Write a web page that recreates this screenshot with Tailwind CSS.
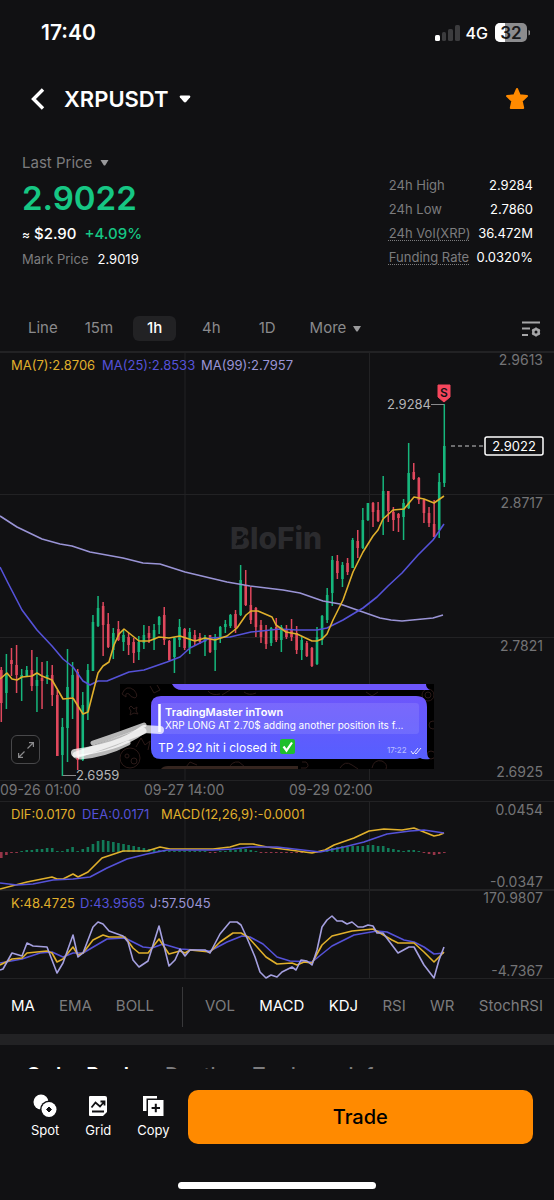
<!DOCTYPE html>
<html lang="en">

<head>
<meta charset="UTF-8">
<meta name="viewport" content="width=device-width, initial-scale=1.0">
<title>XRPUSDT</title>
<script src="https://cdn.jsdelivr.net/npm/@tailwindcss/browser@4"></script>
</head>

<body class="bg-[#111113] text-white font-['Inter',sans-serif] min-h-screen overflow-x-hidden">

	<!-- Status bar -->
	<div class="flex items-center justify-between h-[66px] pl-[41px] pr-6">
		<span class="text-[21px] font-semibold">17:40</span>
		<div class="flex items-center gap-[6px]">
			<svg class="w-[25px] h-4" viewBox="0 0 25 16">
				<rect x="0" y="10" width="5" height="6" rx="1.5" fill="#fff" />
				<rect x="7" y="7" width="4" height="9" rx="1.5" fill="#3c3c3e" />
				<rect x="13" y="4" width="5" height="12" rx="1.5" fill="#3c3c3e" />
				<rect x="20" y="0" width="5" height="16" rx="1.5" fill="#3c3c3e" />
			</svg>
			<span class="text-base font-medium">4G</span>
			<svg class="w-9 h-5" viewBox="0 0 36 20">
				<rect x="1" y="0" width="32" height="19" rx="5" fill="#8c8c8e" />
				<path d="M6 0h5v19H6a5 5 0 0 1-5-5V5a5 5 0 0 1 5-5z" fill="#fff" />
				<path d="M34.500 7q2 .8 2 2.800t-2 2.800z" fill="#8c8c8e" />
				<text x="17" y="16" text-anchor="middle" font-size="17" font-weight="600" fill="#19191b">32</text>
			</svg>
		</div>
	</div>

	<!-- Title -->
	<header class="flex items-center h-[66px] pl-[30px] pr-[25px]">
		<button type="button" aria-label="Back">
			<svg class="w-4 h-6" viewBox="0 0 16 24" fill="none" stroke="#fff" stroke-width="3.400">
				<path d="M13 2.500 3.500 12l9.500 9.500" />
			</svg>
		</button>
		<button type="button" class="flex items-center gap-[10px] ml-[18px]">
			<h1 class="text-[22px] font-semibold">XRPUSDT</h1>
			<svg class="w-3 h-2" viewBox="0 0 12 8" fill="#fff"><path d="M1.500.5h9q1.500.5.6 1.700L7.300 6.800Q6 8 4.700 6.800L.9 2.200Q0 1 1.500.5z" /></svg>
		</button>
		<button type="button" class="ml-auto" aria-label="Favourite">
			<svg class="w-6 h-6" viewBox="0 0 24 24" fill="#ff8a00" stroke="#ff8a00" stroke-width="2" stroke-linejoin="round"><path d="M12 2l2.800 6.300 7.200.8-5.300 4.900 1.500 7H5.800l1.500-7L2 9.100l7.200-.8z" /></svg>
		</button>
	</header>

	<!-- Price -->
	<section class="flex justify-between pl-[22px] pr-[21px] pt-[19px] h-[172px]">
		<div>
			<button type="button" class="flex items-center gap-2 text-[15px] leading-6 text-[#7c7c7e]">Last Price
				<svg class="w-[9px] h-[6px]" viewBox="0 0 8 6" fill="#9a9a9c"><path d="M0 0h8L4.800 5.200q-.8.8-1.600 0z" /></svg>
			</button>
			<div class="text-[33px] leading-[46px] font-semibold text-[#16c784]">2.9022</div>
			<div class="text-[15px] leading-[26px] font-medium"><span class="text-xs">≈</span> $2.90 <span class="text-[#16c784] ml-1">+4.09%</span></div>
			<div class="text-[13px] leading-6"><span class="text-[#7c7c7e] mr-[9px]">Mark Price</span>2.9019</div>
		</div>
		<dl class="grid grid-cols-[auto_auto] content-start gap-x-[6px] pt-[22px] text-[13px] leading-6">
			<dt class="text-[#7c7c7e]">24h High</dt><dd class="text-right">2.9284</dd>
			<dt class="text-[#7c7c7e]">24h Low</dt><dd class="text-right">2.7860</dd>
			<dt class="text-[#7c7c7e] underline decoration-dotted decoration-1 underline-offset-2">24h Vol(XRP)</dt><dd class="text-right">36.472M</dd>
			<dt class="text-[#7c7c7e] underline decoration-dotted decoration-1 underline-offset-2">Funding Rate</dt><dd class="text-right">0.0320%</dd>
		</dl>
	</section>

	<!-- Intervals -->
	<nav class="flex items-center h-[47px] pt-[2px] pl-7 pr-[13px] text-[15px] text-[#8a8a8c]">
		<button type="button" class="mr-[27px]">Line</button>
		<button type="button" class="mr-5">15m</button>
		<button type="button" class="w-[43px] h-[25px] mr-[26px] rounded-md bg-[#222224] text-white font-medium">1h</button>
		<button type="button" class="mr-[38px]">4h</button>
		<button type="button" class="mr-[34px]">1D</button>
		<button type="button" class="flex items-center gap-[7px]">More
			<svg class="w-2 h-[6px]" viewBox="0 0 8 6" fill="#9a9a9c"><path d="M0 0h8L4.800 5.200q-.8.8-1.600 0z" /></svg>
		</button>
		<button type="button" class="ml-auto" aria-label="Chart settings">
			<svg class="w-5 h-4" viewBox="0 0 20 16" fill="none" stroke="#a6a6a8" stroke-width="1.800">
				<path d="M1 1.500h18M1 7.500h8M1 14h6" />
				<circle cx="15" cy="11" r="2.700" stroke-width="2.600" />
				<path d="M15 6.500v9M11.100 8.800l7.800 4.500M11.100 13.300l7.800-4.500" stroke-width="1.800" />
				<circle cx="15" cy="11" r="1.500" fill="#111113" stroke="none" />
			</svg>
		</button>
	</nav>

	<!-- Chart -->
	<main class="relative">
		<svg class="block w-full" viewBox="0 351 554 628" font-size="14" fill="none">
			<defs>
				<linearGradient id="bubble" x1="0" y1="0" x2="0" y2="1">
					<stop offset="0" stop-color="#6d56fb" />
					<stop offset="1" stop-color="#565fff" />
				</linearGradient>
			</defs>

			<!-- grid -->
			<g stroke="#222224">
				<path d="M0 352h554" stroke-width="2" />
				<path d="M0 494.500h554M0 637.500h554M0 780.500h554M0 801.500h554M0 978.500h554" />
				<path d="M0 890h554" stroke-width="2" />
				<path d="M185 353v427M369.500 353v427M185 801v177M369.500 801v177" />
			</g>
			<text x="230" y="549" font-size="30" font-weight="800" fill="#2b2b2e">BloFin</text>
			<path d="M236 545l10-10" stroke="#111113" stroke-width="2" />

			<g id="candles"></g>
			<g id="hist"></g>

			<g stroke-width="1.600" stroke-linejoin="round">
				<path stroke="#9a94d6" d="M0 516 17 527 42 539 60 544 72 546 90 552 123 558 143 563 160 564 185 572 227 582 250 586 283 590 300 593 323 601 340 604 360 611 380 618 391 620 402 621 433 618 443 615" />
				<path stroke="#5552d8" d="M0 567 8 583 22 610 37 630 52 646 63 659 73 667 83 681 90 685 98 681 107 681 129 672 144 670 167 662 180 657 190 648 200 643 210 638 230 637 251 632 280 629 297 630 317 630 327 628 343 620 363 608 377 597 388 586 402 573 418 555 433 540 444 524" />
				<path stroke="#e0b02c" d="M0 679 7 673 12 679 17 680 22 677 32 676 37 673 42 676 52 680 63 699 73 698 83 714 88 712 98 673 103 666 109 662 114 645 119 634 124 629 129 633 139 641 149 641 159 637 169 638 180 636 195 641 205 638 215 640 227 636 237 628 246 615 251 611 258 611 272 617 276 625 286 632 297 634 312 641 317 641 322 639 327 634 333 620 343 600 353 572 363 552 373 536 378 530 383 519 393 510 404 509 414 497 424 499 434 503 444 496" />

				<path stroke="#e0b02c" d="M0 889 27 882 52 877 57 879 63 879 73 874 78 877 88 872 102 858 123 851 147 851 160 847 170 849 213 849 230 847 240 844 253 844 267 847 290 850 312 853 325 850 334 845 354 838 369 831 384 829 402 830 414 828 424 832 434 836 439 835 444 833" />
				<path stroke="#5552d8" d="M0 883 17 885 33 884 53 880 73 879 90 877 107 868 127 859 147 854 167 850 213 850 233 849 250 847 277 847 320 852 344 847 364 842 387 834 410 831 424 830 444 833" />

				<path stroke="#5552d8" d="M0 963 22 959 40 953 52 952 63 957 73 953 83 953 107 939 125 938 143 947 152 948 163 944 180 949 210 951 227 942 242 936 250 937 263 944 277 957 290 961 312 962 332 946 354 935 377 931 387 932 404 940 414 942 424 947 434 954 444 953" />
				<path stroke="#e0b02c" d="M0 965 12 959 22 958 27 953 47 951 52 953 57 962 63 959 73 947 78 955 83 953 93 940 103 935 109 937 125 937 133 948 139 953 148 953 159 939 169 954 180 951 185 953 190 950 210 952 220 942 233 933 241 933 248 937 266 957 277 964 292 963 297 965 304 962 312 963 322 945 332 936 352 931 373 929 380 933 392 940 398 943 414 943 424 952 434 962 444 952" />
				<path stroke="#a5a0e0" d="M0 970 3 969 12 953 22 956 27 943 33 946 47 947 57 973 63 963 73 935 78 957 83 953 93 927 98 922 103 924 109 931 123 936 128 942 133 960 139 967 148 961 159 926 169 966 175 960 180 949 185 956 190 950 205 950 210 953 220 934 230 922 237 922 241 925 247 938 255 957 260 972 266 978 271 975 277 977 282 972 292 967 296 970 301 960 307 961 312 965 317 950 322 927 327 920 332 916 337 921 342 921 347 924 352 922 358 927 363 927 368 925 373 926 377 933 383 933 398 953 409 947 414 947 424 965 434 978 439 960 444 947" />
			</g>

			<!-- legends -->
			<g font-size="13">
				<g fill="#e0b02c">
					<text x="11" y="370">MA(7):2.8706</text>
					<text x="11" y="819">DIF:0.0170</text>
					<text x="161" y="819">MACD(12,26,9):-0.0001</text>
					<text x="11" y="908">K:48.4725</text>
				</g>
				<g fill="#5552d8">
					<text x="102" y="370">MA(25):2.8533</text>
					<text x="82" y="819">DEA:0.0171</text>
					<text x="80" y="908">D:43.9565</text>
				</g>
				<g fill="#9a94d6">
					<text x="201" y="370">MA(99):2.7957</text>
					<text x="150" y="908">J:57.5045</text>
				</g>
			</g>

			<!-- scales -->
			<g fill="#747476" text-anchor="end">
				<text x="543" y="365">2.9613</text>
				<text x="543" y="508">2.8717</text>
				<text x="543" y="651">2.7821</text>
				<text x="543" y="777">2.6925</text>
				<text x="543" y="815">0.0454</text>
				<text x="543" y="887">-0.0347</text>
				<text x="543" y="903">170.9807</text>
				<text x="543" y="976">-4.7367</text>
			</g>
			<g fill="#747476">
				<text x="0" y="795">09-26 01:00</text>
				<text x="144" y="795">09-27 14:00</text>
				<text x="289" y="795">09-29 02:00</text>
			</g>

			<!-- high, low and last price marks -->
			<g fill="#b4b4b6" font-size="13">
				<text x="387" y="409">2.9284</text>
				<text x="76" y="780">2.6959</text>
			</g>
			<path d="M431 404.500h13M63 775.500h13" stroke="#8a8a8c" />
			<path d="M451 446h34" stroke="#c8c8ca" stroke-dasharray="4 3" />
			<rect x="485" y="437" width="58" height="18" rx="2" fill="#111113" stroke="#fff" stroke-width="1.500" />
			<text x="514" y="451" text-anchor="middle" font-size="13" fill="#fff">2.9022</text>
			<path d="M438 385h12v12l-6 5-6-5z" fill="#f6465d" stroke="#f6465d" stroke-linejoin="round" />
			<text x="444" y="397" text-anchor="middle" font-size="12" font-weight="600" fill="#111113">S</text>

			<!-- pasted chat message -->
			<rect x="120" y="684" width="314" height="85" fill="#000" />
			<g stroke="#2b1a18">
				<path d="M122 694q4-10 12-4q5 6 1 8q-5-1-6-4q-4-2-3 3zM131 706l3 3 3-2-1 4 2 3-4-1-4 2 1-4-2-3zM136 747l5-9 4 7 5-4-2 9M150 686l4 7 6-3-3-5" />
				<circle cx="130" cy="758" r="10" /><circle cx="127" cy="756" r="2" /><circle cx="134" cy="761" r="3" />
				<path d="M208 691q4 5 12 3M222 695l8-5M244 692q5 4 12 1M366 692l6 4 6-4M229 769q2-8 10-7l6 5M340 768q5-8 12-3l6 4M372 768q2-9 10-7q6 3 4 8M302 762h4q4 4 0 6h-5M186 767l4-5 7 3" />
				<circle cx="428" cy="695" r="6" /><circle cx="428" cy="695" r="3" />
				<circle cx="433" cy="725" r="4" /><circle cx="431" cy="755" r="4" />
			</g>
			<rect x="434" y="684" width="6" height="85" fill="#111113" />
			<path d="M161 769q2-3 7-3h130v3z" fill="#35251f" />
			<path d="M172 684h254q0 4 4 6H182q-7 0-10-6z" fill="#6d56fb" />
			<path d="M161 696h255q11 0 11 11v45q0 5 3 7-7 1-10-1-2 1-6 1H161q-10 0-10-10v-43q0-10 10-10z" fill="url(#bubble)" />
			<rect x="158" y="703" width="261" height="31" rx="3" fill="#fff" fill-opacity=".1" />
			<path d="M159.500 704v28" stroke="#fff" stroke-width="2.500" />
			<g fill="#fff">
				<text x="165" y="716" font-size="11" font-weight="600">TradingMaster inTown</text>
				<text x="165" y="729" font-size="10">XRP LONG AT 2.70$ adding another position its f...</text>
				<text x="158" y="752" font-size="12">TP 2.92 hit i closed it</text>
				<text x="387" y="753" font-size="8" fill-opacity=".6">17:22</text>
			</g>
			<path d="M411 751l2 3 5-6M415 753l1 1 5-6" stroke="#fff" stroke-opacity=".85" />
			<rect x="280" y="739" width="15" height="15" rx="2" fill="#1fbf2c" />
			<path d="M283.500 746.500l3 4 5.500-8" stroke="#fff" stroke-width="2.200" />

			<!-- marker stroke -->
			<g stroke="#fff" stroke-linecap="round" stroke-linejoin="round">
				<path d="M75 753Q95 750 112 745T144 729L160 730" stroke-width="8" stroke-opacity=".75" />
				<path d="M93 743Q120 734 144 725M80 757Q105 755 128 743" stroke-width="5" stroke-opacity=".7" />
				<path d="M76 755Q100 747 143 731" stroke-width="7" stroke-opacity=".7" />
			</g>
		</svg>
		<button type="button" aria-label="Full screen"
			class="absolute left-[11px] top-[384px] size-[29px] flex items-center justify-center border border-[#48484a] rounded-md bg-[#111113]/70">
			<svg class="size-4" viewBox="0 0 16 16" fill="none" stroke="#8a8a8c" stroke-width="1.200">
				<path d="M9.500 6.500l6-6M11 .6h4.400V5M6.500 9.500l-6 6M.6 11v4.400H5" />
			</svg>
		</button>
	</main>

	<!-- Indicators -->
	<nav class="flex items-center h-[55px] px-[11px] text-[15px] text-[#7c7c7e]">
		<div class="flex gap-6 pr-7">
			<button type="button" class="text-white">MA</button>
			<button type="button">EMA</button>
			<button type="button">BOLL</button>
		</div>
		<div class="flex flex-1 items-center justify-between h-10 pl-[22px] border-l border-[#38383a]">
			<button type="button">VOL</button>
			<button type="button" class="text-white">MACD</button>
			<button type="button" class="text-white">KDJ</button>
			<button type="button">RSI</button>
			<button type="button">WR</button>
			<button type="button">StochRSI</button>
		</div>
	</nav>
	<div class="h-[11px] bg-[#222224]"></div>

	<!-- Tabs, mostly hidden behind the bottom bar -->
	<nav class="flex items-start gap-[30px] h-6 pl-[26px] pt-4 overflow-hidden text-xl font-medium text-[#7c7c7e]">
		<button type="button" class="text-white font-semibold">Order Book</button>
		<button type="button">Depth</button>
		<button type="button">Trades</button>
		<button type="button">Info</button>
	</nav>

	<!-- Bottom bar -->
	<footer class="bg-[#111113]">
		<div class="flex items-center pt-[21px] pl-[31px] pr-[21px]">
			<div class="flex gap-[26px] text-[13px] leading-5">
				<button type="button" class="flex flex-col items-center gap-[2px]">
					<svg class="size-6" viewBox="0 0 24 24">
						<circle cx="8" cy="8" r="7.500" fill="#fff" />
						<circle cx="16" cy="15.500" r="9" fill="#111113" />
						<circle cx="16" cy="15.500" r="7.500" fill="#fff" />
						<path d="M16 13l2.500 2.500L16 18l-2.500-2.500z" fill="#111113" stroke="#111113" stroke-linejoin="round" />
					</svg>
					Spot
				</button>
				<button type="button" class="flex flex-col items-center gap-[2px]">
					<svg class="size-6" viewBox="0 0 24 24">
						<path d="M4 2h15q2 0 2 2v14l-4 4H4q-1 0-1-1V3q0-1 1-1z" fill="#fff" />
						<path d="M5.500 13.500l4-5 4.500 4 4-4.500M14.500 7.500h4v4M6 17.500h12" fill="none" stroke="#111113" stroke-width="1.800" />
					</svg>
					Grid
				</button>
				<button type="button" class="flex flex-col items-center gap-[2px]">
					<svg class="size-6" viewBox="0 0 24 24">
						<path d="M2 2h14v2.500H5.500V17H2z" fill="#fff" />
						<path d="M7 6h15.500v16H7z" fill="#fff" />
						<path d="M14.800 9.800v8.400M10.600 14h8.400" stroke="#111113" stroke-width="2" />
					</svg>
					Copy
				</button>
			</div>
			<button type="button" class="flex-1 h-[54px] ml-[18px] rounded-[10px] bg-[#ff8a00] text-black text-xl font-medium">Trade</button>
		</div>
		<div class="pt-[38px] pb-[11px]">
			<div class="w-[198px] h-[7px] mx-auto rounded-full bg-white"></div>
		</div>
	</footer>

	<script>
		const UP = '#16b67c';
		const DOWN = '#e0485d';
		const STEP = 5.092;

		// direction, high, low, body top, body bottom
		const candles = [
			['d', 667, 722, 670, 703], ['u', 654, 709, 673, 693], ['d', 648, 676, 660, 664], ['d', 645, 693, 665, 675],
			['u', 669, 701, 675, 677], ['u', 666, 677, 670, 676], ['d', 650, 691, 670, 686], ['u', 657, 712, 680, 686],
			['d', 662, 709, 678, 681], ['u', 661, 684, 675, 678], ['d', 665, 706, 675, 695], ['d', 690, 756, 695, 756],
			['u', 718, 776, 727, 755], ['u', 649, 762, 687, 728], ['u', 662, 719, 675, 697], ['d', 669, 770, 672, 760],
			['u', 692, 761, 705, 760], ['u', 664, 720, 670, 712], ['u', 615, 671, 622, 671], ['u', 596, 627, 608, 626],
			['d', 602, 656, 606, 625], ['d', 613, 648, 624, 647], ['u', 628, 659, 633, 650], ['d', 621, 641, 629, 640],
			['u', 630, 651, 635, 642], ['d', 633, 655, 637, 645], ['d', 638, 663, 642, 653], ['u', 636, 660, 642, 652],
			['u', 625, 649, 635, 643], ['d', 626, 643, 633, 638], ['u', 624, 650, 630, 640], ['u', 616, 634, 617, 625],
			['d', 607, 645, 615, 640], ['d', 640, 661, 641, 660], ['u', 637, 673, 638, 657], ['u', 619, 647, 627, 640],
			['d', 628, 650, 629, 648], ['u', 628, 654, 632, 648], ['d', 630, 646, 635, 640], ['d', 633, 644, 637, 642],
			['u', 635, 656, 637, 642], ['d', 635, 653, 635, 652], ['u', 634, 671, 638, 650], ['u', 626, 643, 627, 637],
			['u', 620, 633, 624, 627], ['u', 614, 628, 615, 626], ['d', 610, 633, 614, 628], ['u', 565, 616, 580, 615],
			['d', 570, 606, 585, 605], ['d', 587, 624, 605, 620], ['d', 607, 637, 608, 627], ['d', 620, 643, 625, 637],
			['d', 625, 649, 630, 644], ['u', 627, 646, 628, 643], ['d', 618, 642, 627, 640], ['u', 625, 652, 627, 640],
			['d', 625, 639, 629, 637], ['d', 619, 641, 629, 637], ['d', 626, 654, 633, 650], ['u', 637, 660, 640, 650],
			['d', 641, 657, 643, 656], ['d', 647, 667, 648, 666], ['u', 627, 665, 637, 664], ['u', 615, 645, 616, 640],
			['u', 588, 623, 595, 620], ['u', 556, 606, 560, 593], ['d', 555, 579, 561, 573], ['u', 562, 587, 565, 579],
			['d', 558, 575, 563, 572], ['u', 538, 568, 540, 568], ['d', 530, 558, 541, 548], ['u', 508, 549, 520, 548],
			['u', 503, 521, 503, 520], ['d', 502, 527, 503, 512], ['d', 502, 522, 510, 521], ['u', 476, 535, 491, 518],
			['d', 491, 522, 491, 511], ['d', 507, 531, 512, 520], ['d', 513, 532, 514, 518], ['u', 499, 540, 503, 517],
			['u', 443, 509, 473, 508], ['d', 463, 480, 472, 479], ['d', 477, 504, 478, 500], ['d', 499, 523, 500, 513],
			['d', 507, 527, 513, 523], ['d', 500, 537, 524, 537], ['u', 473, 538, 482, 530], ['u', 404, 487, 446, 483],
		];

		// MACD bars, px above (+) or below (-) zero
		const hist = [
			-6, -3, -1, -1, 1, 2, 2, 3, 3, 4, 4, 1, 1, 3, 5, 1, 3, 5, 8, 11, 12, 11, 10, 9, 8, 7, 6, 5, 4, 3, 3, 2,
			2, 1, 1, 1, 1, 1, 1, 1, 1, -1, -1, 1, 1, 2, 2, 3, 3, 2, 1, -1, -1, -1, -1, -1, -1, -1, -1, -1, -1, -1, -1,
			1, 3, 4, 5, 6, 5, 6, 6, 6, 7, 7, 6, 6, 4, 3, 2, 1, 2, 2, 1, -1, -2, -3, -2, -1,
		];

		function bar(parent, x, top, bottom, width, fill) {
			const r = document.createElementNS('http://www.w3.org/2000/svg', 'rect');
			r.setAttribute('x', x - width / 2);
			r.setAttribute('y', top);
			r.setAttribute('width', width);
			r.setAttribute('height', bottom - top);
			r.setAttribute('fill', fill);
			parent.appendChild(r);
		}

		const candleGroup = document.getElementById('candles');
		candles.forEach(([dir, high, low, top, bottom], i) => {
			const x = 1.3 + i * STEP;
			const color = dir === 'u' ? UP : DOWN;
			bar(candleGroup, x, high, low, 1.5, color);
			bar(candleGroup, x, top, bottom, 2.6, color);
		});

		const histGroup = document.getElementById('hist');
		hist.forEach((h, i) => {
			const x = 1.3 + i * STEP;
			bar(histGroup, x, h > 0 ? 852 - h : 852, h > 0 ? 852 : 852 - h, 2.6, h > 0 ? '#127a58' : '#963548');
		});
	</script>
</body>

</html>
